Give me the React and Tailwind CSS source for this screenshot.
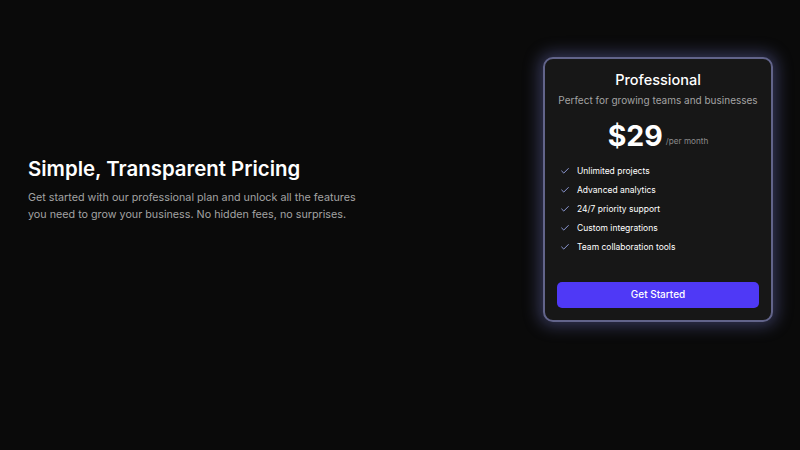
import React from "react";
import { Check } from "lucide-react";

const features = [
  "Unlimited projects",
  "Advanced analytics",
  "24/7 priority support",
  "Custom integrations",
  "Team collaboration tools",
];

const PricingCard = () => {
  return (
    <div className="w-[230px] h-[265px] rounded-[10px] border-2 border-[#62648a] bg-[#171717] shadow-[0_0_16px_4px_rgba(105,108,180,0.45)] px-[12px] pt-[11px] pb-[12px] flex flex-col">
      <h2 className="text-center text-[14.5px] font-medium text-white leading-[20px]">
        Professional
      </h2>
      <p className="text-center text-[10px] text-[#a3a3a3] mt-[3px] leading-[14px] whitespace-nowrap">
        Perfect for growing teams and businesses
      </p>
      <div className="flex items-end justify-center mt-[11px] h-[36px]">
        <span className="text-[28.5px] font-bold text-white leading-[36px]">$29</span>
        <span className="text-[8.2px] text-[#8a8a8a] ml-[3px] mb-[6px]">/per month</span>
      </div>
      <ul className="mt-[10px] flex flex-col gap-[5px]">
        {features.map((f) => (
          <li key={f} className="flex items-center gap-[7px] text-[8.5px] text-white leading-[14px]">
            <Check className="w-[10px] h-[10px] text-[#a5b4fc] ml-[3px]" strokeWidth={2} />
            <span>{f}</span>
          </li>
        ))}
      </ul>
      <button className="mt-auto h-[26px] w-full rounded-[5px] bg-[#4f39f6] text-white text-[10px] font-medium">
        Get Started
      </button>
    </div>
  );
};

const App = () => {
  return (
    <div
      className="w-[800px] h-[450px] bg-[#0a0a0a] flex justify-between items-center pl-[28px] pr-[27px] pb-[72px]"
      style={{ fontFamily: "Inter, 'Noto Sans', sans-serif" }}
    >
      <div className="flex flex-col">
        <h1 className="text-[20.4px] font-semibold text-white leading-[26px]">
          Simple, Transparent Pricing
        </h1>
        <p className="mt-[7px] text-[10.75px] text-[#a3a3a3] leading-[17px]">
          Get started with our professional plan and unlock all the features
          <br />
          you need to grow your business. No hidden fees, no surprises.
        </p>
      </div>
      <PricingCard />
    </div>
  );
};

export default App;
